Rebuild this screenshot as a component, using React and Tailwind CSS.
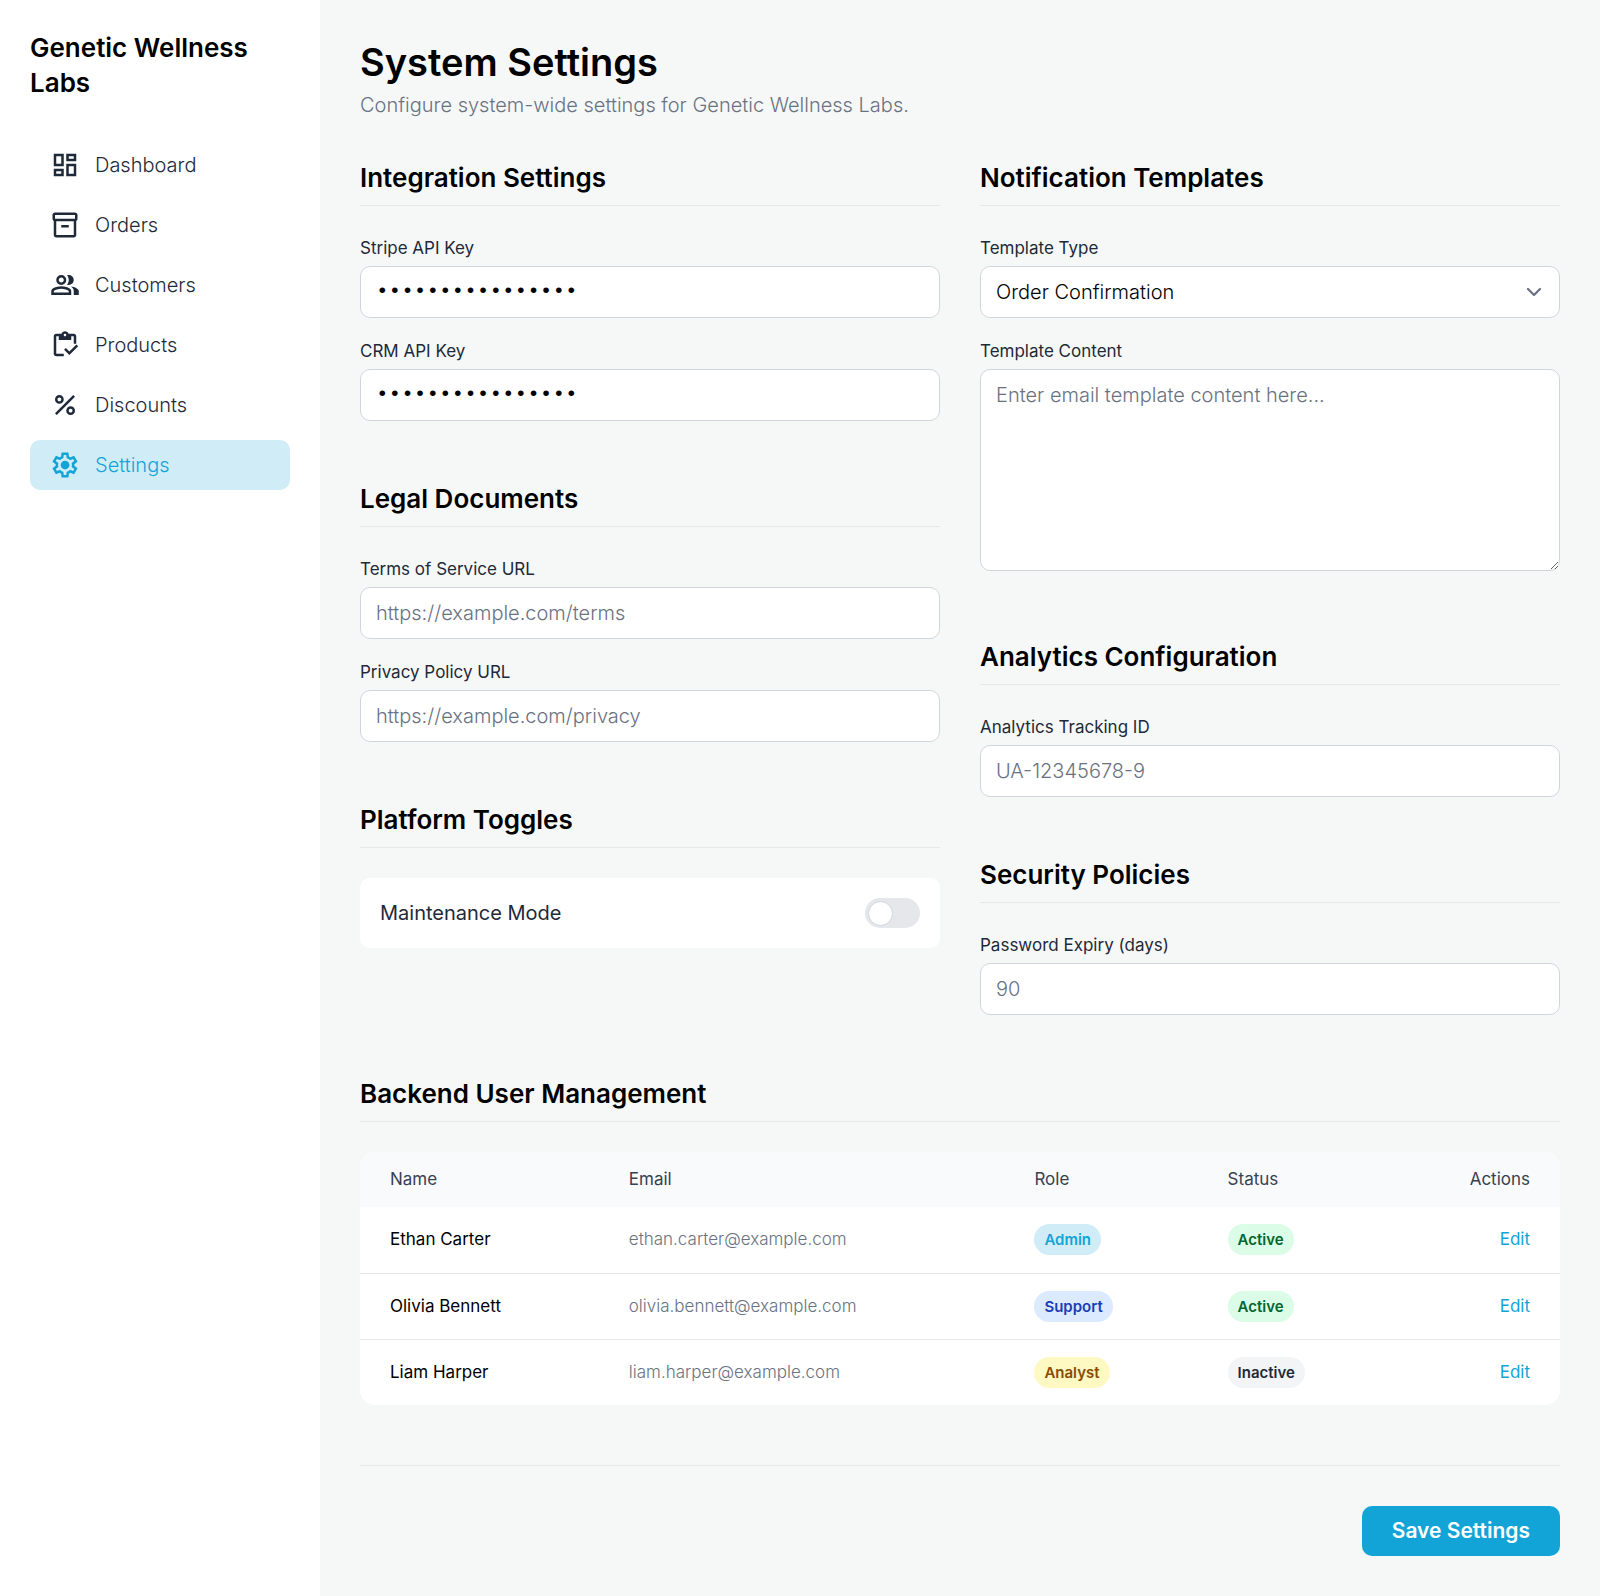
import React, { useState } from "react";

const ICONS = {
  dashboard:
    "M13 9V3h8v6ZM3 13V3h8v10Zm10 8V11h8v10ZM3 21v-6h8v6Zm2-10h4V5H5Zm10 8h4v-6h-4Zm0-12h4V5h-4ZM5 19h4v-2H5Z",
  orders:
    "M5 22q-.825 0-1.413-.587Q3 20.825 3 20V8.725q-.45-.275-.725-.712Q2 7.575 2 7V4q0-.825.587-1.413Q3.175 2 4 2h16q.825 0 1.413.587Q22 3.175 22 4v3q0 .575-.275 1.013-.275.437-.725.712V20q0 .825-.587 1.413Q19.825 22 19 22ZM5 9v11h14V9ZM4 7h16V4H4ZM9 14h6v-2H9Z",
  customers:
    "M1 20v-2.8q0-.85.438-1.563.437-.712 1.162-1.087 1.55-.775 3.15-1.163Q7.35 13 9 13t3.25.387q1.6.388 3.15 1.163.725.375 1.162 1.087Q17 16.35 17 17.2V20Zm18 0v-3q0-1.1-.613-2.113-.612-1.012-1.737-1.737 1.275.15 2.4.512 1.125.363 2.1.888.9.5 1.375 1.112Q23 16.275 23 17v3ZM9 12q-1.65 0-2.825-1.175Q5 9.65 5 8q0-1.65 1.175-2.825Q7.35 4 9 4q1.65 0 2.825 1.175Q13 6.35 13 8q0 1.65-1.175 2.825Q10.65 12 9 12Zm10-4q0 1.65-1.175 2.825Q16.65 12 15 12q-.275 0-.7-.062-.425-.063-.7-.138.675-.8 1.037-1.775Q15 9.05 15 8q0-1.05-.363-2.025Q14.275 5 13.6 4.2q.35-.125.7-.163Q14.65 4 15 4q1.65 0 2.825 1.175Q19 6.35 19 8ZM3 18h12v-.8q0-.275-.137-.5-.138-.225-.363-.35-1.35-.675-2.725-1.013Q10.4 15 9 15t-2.775.337Q4.85 15.675 3.5 16.35q-.225.125-.362.35-.138.225-.138.5Zm6-8q.825 0 1.413-.588Q11 8.825 11 8t-.587-1.412Q9.825 6 9 6q-.825 0-1.412.588Q7 7.175 7 8t.588 1.412Q8.175 10 9 10Z",
  products:
    "M5 21q-.825 0-1.413-.587Q3 19.825 3 19V5q0-.825.587-1.413Q4.175 3 5 3h4.175q.275-.875 1.075-1.438Q11.05 1 12 1q1 0 1.788.562.787.563 1.062 1.438H19q.825 0 1.413.587Q21 4.175 21 5v6h-2V5h-2v3H7V5H5v14h6v2Zm10.5-1-4.25-4.25 1.4-1.4 2.85 2.8 5.65-5.65 1.4 1.45ZM12 5q.425 0 .713-.288Q13 4.425 13 4t-.287-.713Q12.425 3 12 3t-.712.287Q11 3.575 11 4t.288.712Q11.575 5 12 5Z",
  discounts:
    "M7.5 11q-1.45 0-2.475-1.025Q4 8.95 4 7.5q0-1.45 1.025-2.475Q6.05 4 7.5 4q1.45 0 2.475 1.025Q11 6.05 11 7.5q0 1.45-1.025 2.475Q8.95 11 7.5 11Zm0-2q.625 0 1.063-.438Q9 8.125 9 7.5t-.437-1.062Q8.125 6 7.5 6t-1.062.438Q6 6.875 6 7.5t.438 1.062Q6.875 9 7.5 9Zm9 11q-1.45 0-2.475-1.025Q13 17.95 13 16.5q0-1.45 1.025-2.475Q15.05 13 16.5 13q1.45 0 2.475 1.025Q20 15.05 20 16.5q0 1.45-1.025 2.475Q17.95 20 16.5 20Zm0-2q.625 0 1.063-.438Q18 17.125 18 16.5t-.437-1.062Q17.125 15 16.5 15t-1.062.438Q15 15.875 15 16.5t.438 1.062Q15.875 18 16.5 18ZM5.4 20 4 18.6 18.6 4 20 5.4Z",
  settings:
    "m9.25 22-.4-3.2q-.325-.125-.612-.3-.288-.175-.563-.375L4.7 19.375l-2.75-4.75 2.575-1.95Q4.5 12.5 4.5 12.337v-.675q0-.162.025-.337L1.95 9.375l2.75-4.75 2.975 1.25q.275-.2.575-.375.3-.175.6-.3l.4-3.2h5.5l.4 3.2q.325.125.613.3.287.175.562.375l2.975-1.25 2.75 4.75-2.575 1.95q.025.175.025.337v.675q0 .163-.05.338l2.575 1.95-2.75 4.75-2.95-1.25q-.275.2-.575.375-.3.175-.6.3l-.4 3.2Zm2.8-6.5q1.45 0 2.475-1.025Q15.55 13.45 15.55 12q0-1.45-1.025-2.475Q13.5 8.5 12.05 8.5q-1.475 0-2.488 1.025Q8.55 10.55 8.55 12q0 1.45 1.012 2.475Q10.575 15.5 12.05 15.5ZM11 20h1.975l.35-2.65q.775-.2 1.438-.588.662-.387 1.212-.937l2.475 1.025.975-1.7-2.15-1.625q.125-.35.175-.737.05-.388.05-.788t-.05-.787q-.05-.388-.175-.738l2.15-1.625-.975-1.7-2.475 1.05q-.55-.575-1.212-.963-.663-.387-1.438-.587L13 4h-1.975l-.35 2.65q-.775.2-1.437.587-.663.388-1.213.938L5.55 7.15l-.975 1.7 2.15 1.6q-.125.375-.175.75-.05.375-.05.8 0 .4.05.775t.175.75l-2.15 1.625.975 1.7 2.475-1.05q.55.575 1.213.962.662.388 1.437.588Z",
};

const NAV = [
  { id: "dashboard", label: "Dashboard" },
  { id: "orders", label: "Orders" },
  { id: "customers", label: "Customers" },
  { id: "products", label: "Products" },
  { id: "discounts", label: "Discounts" },
  { id: "settings", label: "Settings", active: true },
];

const USERS = [
  {
    name: "Ethan Carter",
    email: "ethan.carter@example.com",
    role: "Admin",
    roleStyle: "bg-[#d0edf7] text-[#13a4d7]",
    status: "Active",
    statusStyle: "bg-green-100 text-green-800",
  },
  {
    name: "Olivia Bennett",
    email: "olivia.bennett@example.com",
    role: "Support",
    roleStyle: "bg-blue-100 text-blue-800",
    status: "Active",
    statusStyle: "bg-green-100 text-green-800",
  },
  {
    name: "Liam Harper",
    email: "liam.harper@example.com",
    role: "Analyst",
    roleStyle: "bg-yellow-100 text-yellow-800",
    status: "Inactive",
    statusStyle: "bg-gray-100 text-gray-800",
  },
];

const FIELD =
  "block w-full rounded-[10px] border border-gray-300 bg-white px-[15px] py-[10px] leading-[30px] text-black placeholder:text-gray-500 placeholder:opacity-100 focus:border-[#13a4d7] focus:outline-none";

function NavIcon({ id }) {
  return (
    <svg viewBox="0 0 24 24" className="size-[30px] shrink-0" fill="currentColor" fillRule="evenodd" aria-hidden="true">
      <path d={ICONS[id]} />
    </svg>
  );
}

function Section({ title, children }) {
  return (
    <section>
      <h2 className="mb-[30px] border-b border-gray-200 pb-[10px] text-[26px] leading-[35px] font-semibold text-black">
        {title}
      </h2>
      <div className="flex flex-col gap-[21px]">{children}</div>
    </section>
  );
}

function Field({ id, label, children }) {
  return (
    <div>
      <label htmlFor={id} className="mb-[5px] block text-[17px] leading-[25px] text-gray-800">
        {label}
      </label>
      {children}
    </div>
  );
}

function TextField({ id, label, className = "text-[20px] font-light", ...props }) {
  return (
    <Field id={id} label={label}>
      <input id={id} className={`${FIELD} ${className}`} {...props} />
    </Field>
  );
}

function SecretField(props) {
  return <TextField type="password" className="font-['Liberation_Mono',monospace] text-[21px]" {...props} />;
}

function Badge({ className, children }) {
  return (
    <span className={`inline-block rounded-full px-[10px] py-[3px] align-middle text-[15px] leading-[25px] font-semibold ${className}`}>
      {children}
    </span>
  );
}

export default function App() {
  const [maintenance, setMaintenance] = useState(false);

  return (
    <div className="flex min-h-screen bg-[#f6f8f8] font-['Inter',sans-serif] text-[20px] leading-[30px]">
      <aside className="w-[320px] shrink-0 bg-white p-[30px]">
        <div className="mb-10 text-[26px] leading-[35px] font-semibold text-black">Genetic Wellness Labs</div>
        <nav className="flex flex-col gap-[10px]">
          {NAV.map((item) => (
            <a
              key={item.id}
              href={`#${item.id}`}
              className={`flex items-center gap-[15px] rounded-[10px] px-5 py-[10px] font-light ${
                item.active ? "bg-[#d0edf7] text-[#13a4d7]" : "text-gray-800"
              }`}
            >
              <NavIcon id={item.id} />
              <span>{item.label}</span>
            </a>
          ))}
        </nav>
      </aside>

      <main className="min-w-0 flex-1 p-10">
        <header className="mb-10">
          <h1 className="text-[38px] leading-[45px] font-semibold text-black">System Settings</h1>
          <p className="mt-[5px] font-light text-gray-500">Configure system-wide settings for Genetic Wellness Labs.</p>
        </header>

        <form onSubmit={(e) => e.preventDefault()}>
          <div className="mb-[61px] grid grid-cols-2 gap-10">
            <div className="flex flex-col gap-[60px]">
              <Section title="Integration Settings">
                <SecretField id="stripe" label="Stripe API Key" defaultValue="sk_test_51HxK2aB" />
                <SecretField id="crm" label="CRM API Key" defaultValue="crm_live_93Jd8xQ" />
              </Section>
              <Section title="Legal Documents">
                <TextField id="terms" label="Terms of Service URL" type="url" placeholder="https://example.com/terms" />
                <TextField id="privacy" label="Privacy Policy URL" type="url" placeholder="https://example.com/privacy" />
              </Section>
              <Section title="Platform Toggles">
                <label className="flex cursor-pointer items-center justify-between rounded-[10px] bg-white p-5 text-gray-800">
                  <span>Maintenance Mode</span>
                  <input
                    type="checkbox"
                    role="switch"
                    checked={maintenance}
                    onChange={(e) => setMaintenance(e.target.checked)}
                    className="flex h-[30px] w-[55px] cursor-pointer appearance-none items-center rounded-full bg-gray-200 px-[3px] before:size-[25px] before:rounded-full before:border before:border-gray-300 before:bg-white before:content-[''] checked:justify-end checked:bg-[#13a4d7]"
                  />
                </label>
              </Section>
            </div>

            <div className="flex flex-col gap-[60px]">
              <Section title="Notification Templates">
                <Field id="template-type" label="Template Type">
                  <div className="relative">
                    <select id="template-type" className={`${FIELD} appearance-none text-[20px] font-light`} defaultValue="order">
                      <option value="order">Order Confirmation</option>
                      <option value="shipping">Shipping Update</option>
                      <option value="results">Results Ready</option>
                    </select>
                    <svg
                      viewBox="0 0 20 20"
                      className="pointer-events-none absolute top-[11px] right-[11px] size-[30px] text-gray-500"
                      fill="none"
                      stroke="currentColor"
                      strokeWidth="1.5"
                      strokeLinecap="round"
                      strokeLinejoin="round"
                      aria-hidden="true"
                    >
                      <path d="M6 8l4 4 4-4" />
                    </svg>
                  </div>
                </Field>
                <Field id="template-content" label="Template Content">
                  <textarea
                    id="template-content"
                    rows={6}
                    placeholder="Enter email template content here..."
                    className={`${FIELD} mb-2 resize-y text-[20px] font-light`}
                  />
                </Field>
              </Section>
              <Section title="Analytics Configuration">
                <TextField id="tracking" label="Analytics Tracking ID" type="text" placeholder="UA-12345678-9" />
              </Section>
              <Section title="Security Policies">
                <TextField id="expiry" label="Password Expiry (days)" type="number" placeholder="90" />
              </Section>
            </div>
          </div>

          <Section title="Backend User Management">
            <div className="overflow-hidden rounded-[15px] bg-white">
              <table className="w-full table-fixed text-left text-[17px] leading-[25px]">
                <colgroup>
                  <col className="w-[19.9%]" />
                  <col className="w-[33.8%]" />
                  <col className="w-[16.1%]" />
                  <col />
                  <col />
                </colgroup>
                <thead className="bg-gray-50 text-gray-700">
                  <tr>
                    <th className="px-[30px] py-[15px] font-normal">Name</th>
                    <th className="px-[30px] py-[15px] font-normal">Email</th>
                    <th className="px-[30px] py-[15px] font-normal">Role</th>
                    <th className="px-[30px] py-[15px] font-normal">Status</th>
                    <th className="px-[30px] py-[15px] text-right font-normal">Actions</th>
                  </tr>
                </thead>
                <tbody className="divide-y divide-gray-200">
                  {USERS.map((user) => (
                    <tr key={user.email} className="h-[66px]">
                      <td className="px-[30px] text-black">{user.name}</td>
                      <td className="px-[30px] font-light text-gray-500">{user.email}</td>
                      <td className="px-[30px]">
                        <Badge className={user.roleStyle}>{user.role}</Badge>
                      </td>
                      <td className="px-[30px]">
                        <Badge className={user.statusStyle}>{user.status}</Badge>
                      </td>
                      <td className="px-[30px] text-right">
                        <a href="#edit" className="text-[#13a4d7] hover:underline">
                          Edit
                        </a>
                      </td>
                    </tr>
                  ))}
                </tbody>
              </table>
            </div>
          </Section>

          <div className="mt-[60px] flex justify-end border-t border-gray-200 pt-10">
            <button type="submit" className="rounded-[10px] bg-[#13a4d7] px-[30px] py-[10px] text-[21px] font-semibold text-white">
              Save Settings
            </button>
          </div>
        </form>
      </main>
    </div>
  );
}
